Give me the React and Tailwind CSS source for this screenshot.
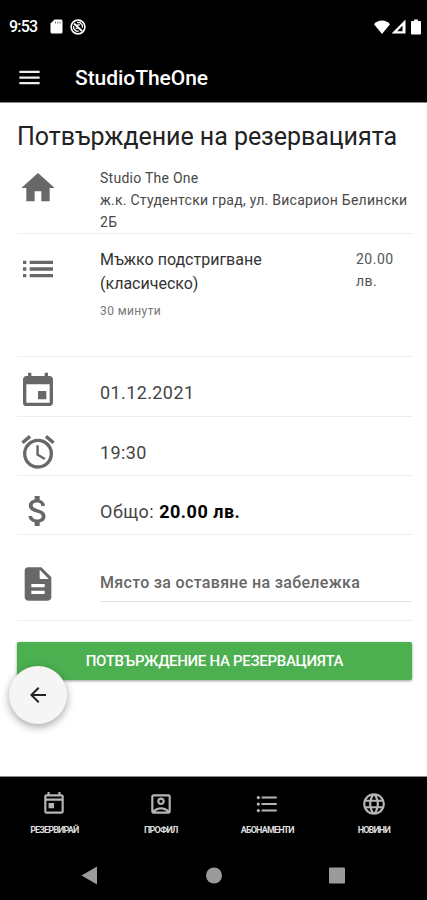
import {
  MdAccessAlarm,
  MdArrowBack,
  MdAttachMoney,
  MdDescription,
  MdEvent,
  MdFormatListBulleted,
  MdHome,
  MdLanguage,
  MdList,
  MdMenu,
  MdOutlineAccountBox,
  MdOutlineToday,
  MdSdCard,
} from "react-icons/md";

const tabs = [
  { label: "РЕЗЕРВИРАЙ", icon: MdOutlineToday },
  { label: "ПРОФИЛ", icon: MdOutlineAccountBox },
  { label: "АБОНАМЕНТИ", icon: MdFormatListBulleted },
  { label: "НОВИНИ", icon: MdLanguage },
];

function StatusBar() {
  return (
    <div className="flex h-[52px] items-center pl-[9px] pr-[6px] pt-px text-white">
      <span className="w-[39px] text-[16px] font-medium tracking-[-0.8px]">9:53</span>
      <svg viewBox="0 0 13 15" className="ml-[2px] h-[15px] w-[13px]" fill="currentColor">
        <path d="M4.500.5H11q1.500 0 1.500 1.500v11q0 1.500-1.500 1.500H2Q.5 14.500.5 13V4.500z" />
        <path d="M5 2.500h1v2H5zM7.300 2.500h1v2h-1zM9.600 2.500h1v2h-1z" fill="#777" />
      </svg>
      <svg viewBox="0 0 16 16" className="ml-[7px] size-4" fill="none" stroke="currentColor">
        <circle cx="8" cy="8" r="6.9" strokeWidth="1.6" />
        <path d="M4 4.5 12 12" strokeWidth="1.8" />
        <path d="M7 3.6h3l2.4 2.6v2.6M3.6 7v2.4l2.6 2.8h2.6M6.5 6.5 9.8 5.6M5.6 9.2h2.2" strokeWidth="1.3" />
      </svg>
      <div className="ml-auto flex items-center">
        <svg viewBox="0 0 16 14" className="h-[14px] w-4" fill="currentColor">
          <path d="M8 14 0 4.2C2 2 5 .6 8 .6s6 1.4 8 3.6z" />
        </svg>
        <svg viewBox="0 0 15 15" className="ml-[1px] size-[15px]" fill="currentColor">
          <path fillRule="evenodd" d="M14.500.5v14H.5zM11.500 6.500v5.700H6.300z" />
        </svg>
        <svg viewBox="0 0 10 16" className="ml-[5px] h-4 w-[10px]" fill="currentColor">
          <path d="M3 .5h4V2h2q1 0 1 1v11.5q0 1-1 1H1q-1 0-1-1V3q0-1 1-1h2z" />
        </svg>
      </div>
    </div>
  );
}

function Row({ icon: Icon, className, iconClass, children }) {
  return (
    <div className={`flex border-b border-[#eee] ${className}`}>
      <Icon className={`ml-px size-10 shrink-0 text-[#686868] ${iconClass}`} />
      <div className="ml-[42px] min-w-0 flex-1">{children}</div>
    </div>
  );
}

export default function App() {
  return (
    <div className="flex h-[900px] w-[427px] flex-col bg-white font-['Roboto','Noto_Sans',sans-serif] text-[#333]">
      <header className="h-[103px] border-b border-[#888] bg-black">
        <StatusBar />
        <div className="flex h-[50px] items-center pl-[16px] text-white">
          <MdMenu className="size-[27px] text-[#eee]" />
          <h1 className="ml-[32px] pt-[3px] text-[21px] font-medium tracking-[-0.05px]">StudioTheOne</h1>
        </div>
      </header>

      <main className="relative flex-1 pl-[17px] pr-[15px]">
        <h2 className="h-[62px] whitespace-nowrap pt-[17px] text-[25px] leading-[34px] tracking-[-0.04px] text-[#222]">
          Потвърждение на резервацията
        </h2>

        <Row icon={MdHome} className="h-[69px]" iconClass="mt-[3px]">
          <div className="-mr-3 pt-[2px] text-[14px] leading-[22px] tracking-[0.26px] text-[#484848]">
            <p>Studio The One</p>
            <p>
              ж.к. Студентски град, ул. Висарион Белински
              <br />
              2Б
            </p>
          </div>
        </Row>

        <Row icon={MdList} className="h-[123px]" iconClass="mt-[15px]">
          <div className="flex pt-[14px]">
            <div className="w-[256px]">
              <p className="text-[16px] leading-6">
                Мъжко подстригване
                <br />
                (класическо)
              </p>
              <p className="mt-[6px] text-[12px] leading-[18px] tracking-[0.4px] text-[#777]">30 минути</p>
            </div>
            <p className="w-[50px] text-[14px] leading-[22px] tracking-[0.5px] text-[#555]">
              20.00 лв.
            </p>
          </div>
        </Row>

        <Row icon={MdEvent} className="h-[60px]" iconClass="mt-[14px]">
          <p className="pt-[23px] text-[18px] leading-[26px] tracking-[0.4px] text-[#444]">01.12.2021</p>
        </Row>

        <Row icon={MdAccessAlarm} className="h-[59px]" iconClass="mt-[15px]">
          <p className="pt-[23px] text-[18px] leading-[26px] tracking-[0.4px] text-[#444]">19:30</p>
        </Row>

        <Row icon={MdAttachMoney} className="h-[59px]" iconClass="mt-[15px]">
          <p className="pt-[23px] text-[18px] leading-[26px] tracking-[0.5px] text-[#444]">
            Общо: <b className="text-black">20.00 лв.</b>
          </p>
        </Row>

        <Row icon={MdDescription} className="h-[86px]" iconClass="mt-[29px]">
          <p className="h-[67px] border-b border-[#e2e2e2] pt-[36px] text-[16px] font-medium leading-6 tracking-[0.32px] text-[#666]">
            Място за оставяне на забележка
          </p>
        </Row>

        <button className="mt-[21px] flex h-[38px] w-full items-center justify-center rounded-[2px] bg-[#4caf50] text-[15px] font-medium tracking-[-0.3px] text-white shadow-[0_1px_3px_rgba(0,0,0,0.4)]">
          ПОТВЪРЖДЕНИЕ НА РЕЗЕРВАЦИЯТА
        </button>

        {/* floating back button overlaps the confirm button */}
        <button className="absolute left-[9px] top-[563px] flex size-[58px] items-center justify-center rounded-full bg-[#f5f5f5] text-[#222] shadow-[0_3px_8px_rgba(0,0,0,0.35)]">
          <MdArrowBack className="size-6" />
        </button>
      </main>

      <footer className="h-[124px] border-t border-[#888] bg-black">
        <nav className="grid h-[73px] grid-cols-4 pl-px pt-[14px]">
          {tabs.map(({ label, icon: Icon }) => (
            <div key={label} className="flex flex-col items-center text-[#b5b5b5]">
              <Icon className="size-[26px]" />
              <span className="mt-[7px] text-[9px] font-bold leading-3 tracking-[-0.85px] text-[#ddd]">{label}</span>
            </div>
          ))}
        </nav>
        <svg viewBox="0 0 427 50" className="h-[50px] w-full" fill="#9b9b9b">
          <path d="M81.500 25.500 97 16.500v18z" />
          <circle cx="214" cy="25.500" r="8" />
          <rect x="329" y="17.500" width="16" height="16" rx="1" />
        </svg>
      </footer>
    </div>
  );
}
